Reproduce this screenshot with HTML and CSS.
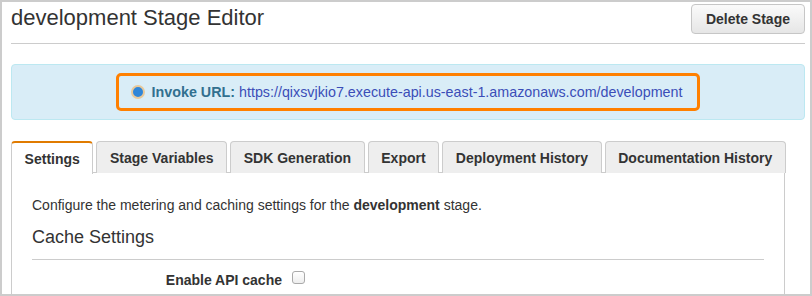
FILE: index.html
```html
<!DOCTYPE html>
<html>
<head>
<meta charset="utf-8">
<link rel="stylesheet" href="styles.css">
</head>
<body>
<div class="frame">
  <div class="header">
    <h1 class="title">development Stage Editor</h1>
    <button class="btn">Delete Stage</button>
  </div>
  <div class="info">
    <div class="highlight">
      <span class="radio"></span>
      <span class="label">Invoke URL:</span>
      <a class="url">https://qixsvjkio7.execute-api.us-east-1.amazonaws.com/development</a>
    </div>
  </div>
  <div class="tabs">
    <div class="tab active">Settings</div>
    <div class="tab">Stage Variables</div>
    <div class="tab">SDK Generation</div>
    <div class="tab">Export</div>
    <div class="tab">Deployment History</div>
    <div class="tab">Documentation History</div>
  </div>
  <div class="panel">
    <p class="desc">Configure the metering and caching settings for the <b>development</b> stage.</p>
    <h2 class="section">Cache Settings</h2>
    <div class="row">
      <span class="row-label">Enable API cache</span>
      <span class="checkbox"></span>
    </div>
  </div>
</div>
</body>
</html>
```

FILE: styles.css
```css
html, body {
  margin: 0;
  padding: 0;
  background: #fff;
}
body {
  font-family: "Liberation Sans", Arial, sans-serif;
  color: #333;
}
.frame {
  width: 812px;
  height: 296px;
  box-sizing: border-box;
  border: 2px solid #ccc;
  padding: 0 5px 0 9px;
  overflow: hidden;
}
.header {
  display: flex;
  justify-content: space-between;
  align-items: flex-start;
  height: 41px;
  border-bottom: 1px solid #ccc;
}
.title {
  margin: 3px 0 0 0;
  font-size: 22px;
  font-weight: normal;
  line-height: 26px;
  color: #333;
}
.btn {
  margin-top: 2px;
  height: 30px;
  padding: 0 14px;
  font-family: "Liberation Sans", Arial, sans-serif;
  font-size: 14px;
  font-weight: bold;
  color: #333;
  border: 1px solid #c6c6c6;
  border-radius: 4px;
  background: linear-gradient(#fafafa, #e6e6e6);
}
.info {
  margin-top: 20px;
  height: 56px;
  box-sizing: border-box;
  background: #d9edf7;
  border: 1px solid #bce8f1;
  border-radius: 4px;
  display: flex;
  justify-content: center;
  align-items: center;
}
.highlight {
  display: flex;
  align-items: center;
  height: 38px;
  box-sizing: border-box;
  border: 3px solid #ff8000;
  border-radius: 5px;
  padding: 0 15px 0 12px;
  font-size: 14.3px;
}
.radio {
  width: 10px;
  height: 10px;
  border-radius: 50%;
  background: #2f86d8;
  border: 2px solid #e8c99a;
  margin-right: 7px;
}
.label {
  font-weight: bold;
  color: #31708f;
  margin-right: 4px;
}
.url {
  color: #3b4db8;
}
.tabs {
  display: flex;
  gap: 3px;
  margin-top: 21px;
  width: 774px;
  height: 32px;
  border-bottom: 1px solid #ccc;
  box-sizing: border-box;
}
.tab {
  flex-shrink: 0;
  white-space: nowrap;
  height: 32px;
  box-sizing: border-box;
  padding: 0 12.6px;
  display: flex;
  align-items: center;
  font-size: 14px;
  font-weight: bold;
  color: #333;
  background: #eee;
  border: 1px solid #ccc;
  border-bottom: none;
  border-radius: 4px 4px 0 0;
}
.tab.active {
  background: #fff;
  border-top: 2px solid #e07b00;
  height: 33px;
}
.panel {
  width: 774px;
  box-sizing: border-box;
  border: 1px solid #ccc;
  border-top: none;
  height: 130px;
  padding: 0 20px;
}
.desc {
  margin: 0;
  padding-top: 24px;
  font-size: 14px;
  line-height: 16px;
}
.section {
  margin: 13px 0 0 0;
  font-size: 18px;
  font-weight: normal;
  line-height: 22px;
  padding-bottom: 11px;
  border-bottom: 1px solid #ccc;
}
.row {
  display: flex;
  align-items: center;
  margin-top: 12px;
}
.row-label {
  width: 250px;
  text-align: right;
  font-size: 14px;
  font-weight: bold;
}
.checkbox {
  width: 11px;
  height: 11px;
  border: 1px solid #aaa;
  border-radius: 3px;
  background: linear-gradient(#fff, #eee);
  margin-left: 10px;
  margin-top: -6px;
}
```
